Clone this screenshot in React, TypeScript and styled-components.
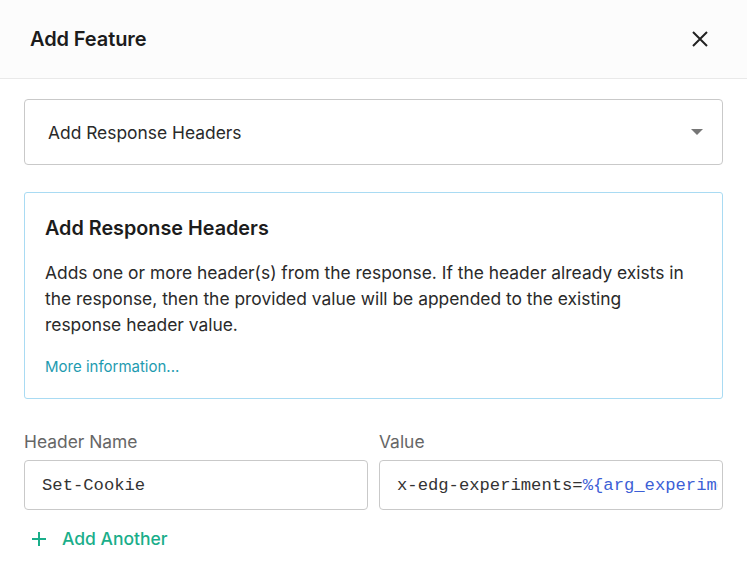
import React from 'react';
import styled, { createGlobalStyle } from 'styled-components';

const GlobalStyle = createGlobalStyle`
  html, body {
    margin: 0;
    padding: 0;
    background: #ffffff;
    font-family: Inter, "Noto Sans", sans-serif;
    color: #222;
  }
  * {
    box-sizing: border-box;
  }
`;

const Dialog = styled.div`
  width: 747px;
  height: 567px;
  background: #fff;
  overflow: hidden;
`;

const Header = styled.header`
  height: 79px;
  display: flex;
  align-items: center;
  justify-content: space-between;
  padding: 0 38px 0 30px;
  background: #fcfcfc;
  border-bottom: 1px solid #e9e9e9;
`;

const Title = styled.h2`
  margin: 0;
  font-size: 20px;
  font-weight: 600;
  color: #1c1c1c;
  letter-spacing: -0.1px;
`;

const CloseButton = styled.button`
  border: none;
  background: none;
  padding: 0;
  display: flex;
  cursor: pointer;
  color: #222;
`;

const Body = styled.div`
  padding: 20px 24px 0 24px;
  display: flex;
  flex-direction: column;
`;

const Select = styled.div`
  height: 66px;
  display: flex;
  align-items: center;
  justify-content: space-between;
  padding: 0 19px 0 23px;
  border: 1px solid #c9c9c9;
  border-radius: 4px;
  font-size: 17.4px;
  color: #2a2a2a;
`;

const Caret = styled.span`
  width: 0;
  height: 0;
  border-left: 6px solid transparent;
  border-right: 6px solid transparent;
  border-top: 6px solid #767676;
`;

const InfoBox = styled.section`
  margin-top: 27px;
  height: 207px;
  border: 1px solid #a9dbf3;
  border-radius: 3px;
  padding: 22px 20px 0 20px;
`;

const InfoTitle = styled.h3`
  margin: 0 0 19px 0;
  font-size: 19.8px;
  font-weight: 600;
  color: #1c1c1c;
  line-height: 26px;
`;

const InfoText = styled.p`
  margin: 0;
  font-size: 17.4px;
  line-height: 26px;
  color: #2a2a2a;
`;

const InfoLink = styled.a`
  display: block;
  margin-top: 19px;
  font-size: 15px;
  color: #1e9bb0;
  text-decoration: none;
`;

const Fields = styled.div`
  margin-top: 33px;
  display: grid;
  grid-template-columns: minmax(0, 1fr) minmax(0, 1fr);
  column-gap: 11px;
`;

const Field = styled.div`
  display: flex;
  flex-direction: column;
  min-width: 0;
`;

const Label = styled.label`
  font-size: 17.4px;
  color: #666;
  line-height: 20px;
  margin-bottom: 8px;
`;

const Input = styled.div`
  height: 50px;
  display: flex;
  align-items: center;
  padding: 0 4px 0 17px;
  border: 1px solid #c9c9c9;
  border-radius: 4px;
  font-family: "Liberation Mono", "Courier New", monospace;
  font-size: 17.2px;
  color: #333;
`;

const InputText = styled.span`
  flex: 1;
  min-width: 0;
  white-space: nowrap;
  overflow: hidden;
`;

const Variable = styled.span`
  color: #3d5fd6;
`;

const AddButton = styled.button`
  margin-top: 18px;
  align-self: flex-start;
  display: flex;
  align-items: center;
  gap: 16px;
  padding: 0 0 0 8px;
  border: none;
  background: none;
  font-family: Inter, "Noto Sans", sans-serif;
  font-size: 17.5px;
  font-weight: 500;
  color: #1aae8a;
  cursor: pointer;
`;

const App: React.FC = () => (
  <>
    <GlobalStyle />
    <Dialog>
      <Header>
        <Title>Add Feature</Title>
        <CloseButton aria-label="Close">
          <svg width="18" height="18" viewBox="0 0 18 18">
            <path d="M2 2L16 16M16 2L2 16" stroke="currentColor" strokeWidth="2" />
          </svg>
        </CloseButton>
      </Header>
      <Body>
        <Select>
          <span>Add Response Headers</span>
          <Caret />
        </Select>
        <InfoBox>
          <InfoTitle>Add Response Headers</InfoTitle>
          <InfoText>
            Adds one or more header(s) from the response. If the header already exists in the
            response, then the provided value will be appended to the existing response header
            value.
          </InfoText>
          <InfoLink href="#">More information...</InfoLink>
        </InfoBox>
        <Fields>
          <Field>
            <Label>Header Name</Label>
            <Input>
              <InputText>Set-Cookie</InputText>
            </Input>
          </Field>
          <Field>
            <Label>Value</Label>
            <Input>
              <InputText>
                x-edg-experiments=<Variable>%{'{'}arg_experiments{'}'}</Variable>
              </InputText>
            </Input>
          </Field>
        </Fields>
        <AddButton>
          <svg width="14" height="14" viewBox="0 0 14 14">
            <path d="M7 0V14M0 7H14" stroke="currentColor" strokeWidth="2" />
          </svg>
          Add Another
        </AddButton>
      </Body>
    </Dialog>
  </>
);

export default App;
